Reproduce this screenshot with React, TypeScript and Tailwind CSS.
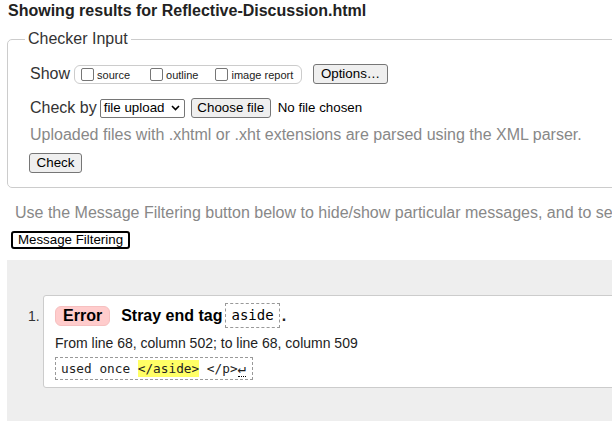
import React from "react";

const btn =
  "bg-[#efefef] border border-[#767676] rounded-[3px] text-[13.33px] leading-[16px] text-black px-[4px] whitespace-nowrap";

const Checkbox = ({ label, className }: { label: string; className?: string }) => (
  <label className={"flex items-center " + (className ?? "")}>
    <span className="w-[13px] h-[13px] border border-[#767676] rounded-[2px] bg-white" />
    <span className="ml-[3px] text-[11px] leading-[13px] mt-[3px]">{label}</span>
  </label>
);

const App = () => {
  return (
    <div className="w-[612px] h-[431px] overflow-hidden bg-white text-[#222] font-['Liberation_Sans',Arial,sans-serif]">
      <div className="w-[900px]">
        {/* Title */}
        <h2 className="mt-[1px] pl-[8px] text-[16px] leading-[19px] font-bold">
          Showing results for Reflective-Discussion.html
        </h2>

        {/* Checker input */}
        <fieldset className="mt-[10px] ml-[7px] border border-[#cccccc] rounded-[5px] pl-[17px] pb-[13px]">
          <legend className="px-[3px] text-[16px] leading-[18px] text-[#333]">Checker Input</legend>

          <div className="ml-[5px] mt-[15px] flex items-center h-[22px]">
            <span className="text-[16px] leading-[18px] text-[#333]">Show</span>
            <div className="ml-[4px] flex items-center h-[19px] w-[228px] border border-[#cccccc] rounded-[6px] pl-[6px]">
              <Checkbox label="source" />
              <Checkbox label="outline" className="ml-[20px]" />
              <Checkbox label="image report" className="ml-[17px]" />
            </div>
            <button className={btn + " ml-[11px] h-[20px] w-[75px]"}>Options…</button>
          </div>

          <div className="ml-[5px] mt-[12px] flex items-center h-[22px]">
            <span className="text-[16px] leading-[18px] text-[#333]">Check by</span>
            <div className="ml-[3px] flex items-center justify-between h-[19px] w-[85px] border border-[#767676] rounded-[2px] bg-white pl-[3px] pr-[4px] text-[13.33px] leading-[16px] text-black whitespace-nowrap">
              <span>file upload</span>
              <svg width="9" height="6" viewBox="0 0 9 6">
                <path d="M1 1 L4.5 4.5 L8 1" fill="none" stroke="#000" strokeWidth="1.6" />
              </svg>
            </div>
            <button className={btn + " ml-[6px] h-[20px] w-[80px]"}>Choose file</button>
            <span className="ml-[7px] text-[13.33px] leading-[16px] text-black">No file chosen</span>
          </div>

          <p className="ml-[5px] mt-[7px] text-[16px] leading-[18px] text-[#888]">
            Uploaded files with .xhtml or .xht extensions are parsed using the XML parser.
          </p>

          <div className="ml-[4px] mt-[8px] flex items-center h-[22px]">
            <button className={btn + " h-[20px] w-[53px]"}>Check</button>
          </div>
        </fieldset>

        {/* Filtering */}
        <p className="mt-[16px] pl-[15px] text-[16px] leading-[18px] text-[#888] whitespace-nowrap">
          Use the Message Filtering button below to hide/show particular messages, and to see total counts of errors and warnings.
        </p>
        <button className="mt-[9px] ml-[11px] h-[18px] w-[119px] border-2 border-black rounded-[3px] bg-white text-[13.33px] leading-[14px] text-black">
          Message Filtering
        </button>

        {/* Results */}
        <div className="mt-[9px] ml-[7px] bg-[#eeeeee] pt-[35px] pb-[33px]">
          <ol className="flex">
            <li className="flex w-full">
              <span className="w-[36px] pl-[21px] pt-[13px] text-[14px] leading-[16px] text-[#333]">1.</span>
              <div className="flex-1 bg-white border border-[#cccccc] rounded-[3px] pl-[11px] pt-[7px] pb-[7px]">
                <div className="flex items-center h-[25px]">
                  <span className="h-[20px] flex items-center bg-[#ffcccc] border border-[#f6c0c0] rounded-[6px] px-[7px] text-[16px] font-bold leading-[18px] text-black">
                    Error
                  </span>
                  <span className="ml-[11px] text-[16px] font-bold leading-[18px] text-black">Stray end tag</span>
                  <code className="ml-[3px] h-[25px] flex items-center border border-dashed border-[#999] px-[5px] font-['DejaVu_Sans_Mono',monospace] text-[14px] text-black">
                    aside
                  </code>
                  <span className="ml-[2px] text-[16px] font-bold leading-[18px]">.</span>
                </div>
                <p className="mt-[6px] text-[14px] leading-[18px] text-[#222]">
                  From line 68, column 502; to line 68, column 509
                </p>
                <div className="mt-[5px] flex">
                  <code className="h-[23px] flex items-center border border-dashed border-[#999] pl-[5px] pr-[6px] font-['DejaVu_Sans_Mono',monospace] text-[12.75px] leading-[17px] text-[#222] whitespace-pre">
                    <span>used once </span>
                    <span className="bg-[#ffff66]">&lt;/aside&gt;</span>
                    <span> &lt;/p&gt;</span>
                    <span className="border-b border-dotted border-black text-[14px] leading-[15px]">↵</span>
                  </code>
                </div>
              </div>
            </li>
          </ol>
        </div>
      </div>
    </div>
  );
};

export default App;
